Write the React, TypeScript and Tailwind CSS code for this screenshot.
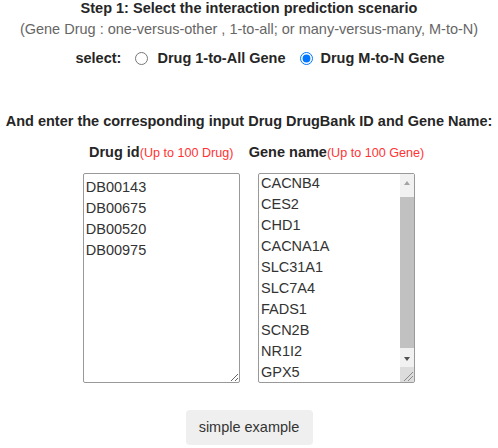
import { useLayoutEffect, useRef } from "react";

const drugs = ["DB00143", "DB00675", "DB00520", "DB00975"];
const genes = ["CACNB4", "CES2", "CHD1", "CACNA1A", "SLC31A1", "SLC7A4", "FADS1", "SCN2B", "NR1I2", "GPX5"];

function FakeScrollbar() {
  return (
    <div className="absolute top-[1px] right-[1px] bottom-[1px] w-[14px] flex flex-col pointer-events-none">
      <div className="h-[18px] bg-[#f1f1f1] flex items-center justify-center">
        <div className="w-0 h-0 border-x-[3.5px] border-x-transparent border-b-[4px] border-b-[#a3a3a3]" />
      </div>
      <div className="flex-1 bg-[#f1f1f1] pt-[5px] pb-[2px]">
        <div className="h-full bg-[#c1c1c1]" />
      </div>
      <div className="h-[17px] bg-[#f1f1f1] flex items-center justify-center">
        <div className="w-0 h-0 border-x-[3.5px] border-x-transparent border-t-[4px] border-t-[#505050]" />
      </div>
      <div className="h-[15px] bg-[#dcdcdc] flex items-end justify-end">
        <svg width="14" height="14" viewBox="0 0 14 14">
          <path d="M4 13 L13 4 M8 13 L13 8" stroke="#8a8a8a" strokeWidth="1" />
        </svg>
      </div>
    </div>
  );
}

export default function App() {
  const geneRef = useRef<HTMLTextAreaElement>(null);

  useLayoutEffect(() => {
    const el = geneRef.current;
    if (!el) return;
    el.scrollTop = 4;
    requestAnimationFrame(() => {
      el.scrollTop = 4;
    });
  }, []);

  return (
    <div className="w-[498px] h-[448px] bg-white text-center text-[14.5px] text-[#262626] font-['Liberation_Sans',Arial,sans-serif] overflow-hidden">
      <p className="font-bold leading-[17px] whitespace-nowrap">Step 1: Select the interaction prediction scenario</p>
      <p className="mt-[4px] leading-[17px] text-[#666] whitespace-nowrap">
        (Gene Drug : one-versus-other , 1-to-all; or many-versus-many, M-to-N)
      </p>

      <div className="mt-[12px] flex items-center justify-center pl-[22px] font-bold leading-[17px] whitespace-nowrap">
        <span>select:</span>
        <label className="flex items-center">
          <input type="radio" name="mode" className="ml-[14px] mr-[9px] w-[13px] h-[13px]" />
          Drug 1-to-All Gene
        </label>
        <label className="flex items-center">
          <input type="radio" name="mode" defaultChecked className="ml-[14px] mr-[8px] w-[13px] h-[13px]" />
          Drug M-to-N Gene
        </label>
      </div>

      <p className="mt-[46px] font-bold leading-[17px] whitespace-nowrap">
        And enter the corresponding input Drug DrugBank ID and Gene Name:
      </p>

      <div className="mt-[14px] flex justify-center gap-[9px] pl-[9px]">
        <div className="flex flex-col items-center">
          <p className="leading-[17px] whitespace-nowrap">
            <span className="font-bold">Drug id</span>
            <span className="text-[12.6px] text-[#ff3333]">(Up to 100 Drug)</span>
          </p>
          <textarea
            defaultValue={drugs.join("\n")}
            className="mt-[11px] w-[157px] h-[210px] border border-[#999] rounded-[2px] pt-[3px] px-[2px] text-left text-[14.5px] leading-[21px] text-[#333] outline-none"
          />
        </div>
        <div className="flex flex-col items-center">
          <p className="leading-[17px] whitespace-nowrap">
            <span className="font-bold">Gene name</span>
            <span className="text-[12.6px] text-[#ff3333]">(Up to 100 Gene)</span>
          </p>
          <div className="relative mt-[11px] w-[157px] h-[210px]">
            <textarea
              ref={geneRef}
              defaultValue={genes.join("\n")}
              className="block w-full h-full border border-[#999] rounded-[2px] py-[3px] pl-[2px] pr-[16px] text-left text-[14.5px] leading-[21px] text-[#333] outline-none resize-none"
            />
            <FakeScrollbar />
          </div>
        </div>
      </div>

      <button className="mt-[27px] w-[127px] h-[35px] rounded-[4px] bg-[#efefef] text-[14.5px] text-[#333]">
        simple example
      </button>
    </div>
  );
}
